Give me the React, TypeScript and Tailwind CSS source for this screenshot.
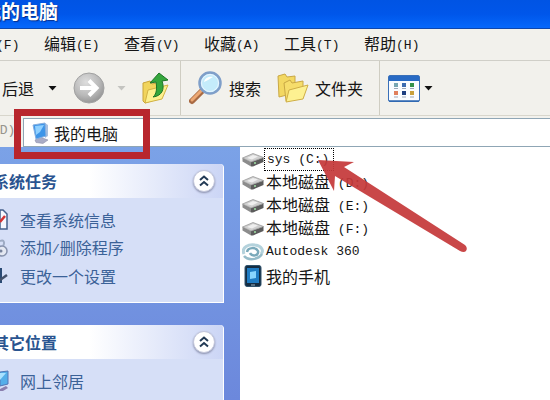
import React from 'react';

const Latin = ({ children }: { children: React.ReactNode }) => (
  <span className="align-[1px] font-['Liberation_Mono','Noto_Sans_CJK_SC',monospace] text-[13px]">{children}</span>
);

const menus: [string, string][] = [
  ['文件', 'F'],
  ['编辑', 'E'],
  ['查看', 'V'],
  ['收藏', 'A'],
  ['工具', 'T'],
  ['帮助', 'H'],
];

const Caret = ({ color = '#111' }: { color?: string }) => (
  <svg width="9" height="5" viewBox="0 0 9 5" className="shrink-0">
    <path d="M0.5 0H8.500L4.500 4.500Z" fill={color} />
  </svg>
);

const Divider = () => <div className="h-[54px] w-px shrink-0 bg-[#cfcdc2]" />;

const ForwardIcon = () => (
  <svg width="32" height="32" viewBox="0 0 32 32" className="shrink-0">
    <defs>
      <radialGradient id="fwd" cx="0.4" cy="0.3" r="0.75">
        <stop offset="0" stopColor="#dedede" />
        <stop offset="0.6" stopColor="#b9b9b9" />
        <stop offset="1" stopColor="#909090" />
      </radialGradient>
    </defs>
    <circle cx="16" cy="16" r="15" fill="url(#fwd)" stroke="#a2a2a2" />
    <path d="M7 16H23M16 8.500L23.500 16L16 23.500" fill="none" stroke="#fff" strokeWidth="4" />
  </svg>
);

const UpFolderIcon = () => (
  <svg width="28" height="32" viewBox="0 0 28 32" className="shrink-0">
    <path d="M1 11L8 9L10 12L19 10V26L3 31L1 29Z" fill="#f1d45c" stroke="#c9a43a" />
    <path d="M6 18L26 13L20 27L3 31Z" fill="#fdf08e" stroke="#d2b244" />
    <path d="M11 25C15 22 15 15 14 10L8 11L17 1L26 8L20 9C23 17 20 24 11 25Z" fill="#35a63c" stroke="#1c7526" />
  </svg>
);

const SearchIcon = () => (
  <svg width="34" height="34" viewBox="0 0 34 34" className="shrink-0">
    <path d="M3 30L13 20" stroke="#a86a43" strokeWidth="6" strokeLinecap="round" />
    <path d="M3 29L12 20" stroke="#eda873" strokeWidth="3" strokeLinecap="round" />
    <circle cx="21" cy="12" r="10.500" fill="#c4ecfb" stroke="#7f9fc9" strokeWidth="2.500" />
    <circle cx="21" cy="12" r="8.500" fill="none" stroke="#ebf6ff" strokeWidth="1" />
    <path d="M15 11C16 6 21 5 24 6C20 8 18 10 15 11Z" fill="#fff" />
  </svg>
);

const FoldersIcon = () => (
  <svg width="32" height="30" viewBox="0 0 32 30" className="shrink-0">
    <path d="M1 3L8 1L10 4L18 3V20L2 24Z" fill="#f3d862" stroke="#c9a845" />
    <path d="M7 10L13 7L15 10L26 8V24L9 28Z" fill="#f6dd6b" stroke="#c9a845" />
    <path d="M12 17L31 12L26 26L9 29Z" fill="#fdf191" stroke="#cfae45" />
  </svg>
);

const ViewsIcon = () => (
  <svg width="32" height="27" viewBox="0 0 32 27" className="shrink-0">
    <rect x="0.500" y="0.500" width="31" height="26" rx="1.500" fill="#fafcff" stroke="#3a70b8" />
    <path d="M1 1H31V6H1Z" fill="#286ac4" />
    <path d="M1 26H31" stroke="#2e67b1" strokeWidth="1.500" />
    <path d="M6 8h4v4H6Z" fill="#78a6b2" />
    <path d="M14 8h4v4h-4Z" fill="#3b6bb0" />
    <path d="M22 8h4v4h-4Z" fill="#359249" />
    <path d="M6 16h4v4H6Z" fill="#e07f5d" />
    <path d="M14 16h4v4h-4Z" fill="#1d3e80" />
    <path d="M22 16h4v4h-4Z" fill="#c8a03c" />
    <path d="M6 13.500h4M14 13.500h4M22 13.500h4M6 22h4M14 22h4M22 22h4" stroke="#9ca7b7" />
  </svg>
);

const ComputerIcon = () => (
  <svg width="18" height="22" viewBox="0 0 18 22" className="shrink-0">
    <path d="M3 18L8 15L16 18L11 21.500L4 20.500Z" fill="#a9acc6" stroke="#8487a5" strokeWidth="0.500" />
    <path d="M13 1L16 3V14L13 16Z" fill="#a8bfdf" />
    <path d="M1 3L13 1L14 14L4 17Z" fill="#3e95e8" stroke="#87aede" />
    <path d="M3 4L12 3L8 10L4 13Z" fill="#91d1ff" />
  </svg>
);

const DriveIcon = () => (
  <svg width="22" height="14" viewBox="0 0 22 14" className="shrink-0">
    <path d="M0.500 5L9 9V13.500L0.500 8.500Z" fill="#8c8c8c" />
    <path d="M9 9L21.500 4.500V9L11 13.500H9Z" fill="#5c5c5c" />
    <path d="M0.500 5L11 0.500L21.500 4.500L9 9Z" fill="#cfcfcf" stroke="#8e8e8e" strokeWidth="0.700" />
    <path d="M5 5L11 2L16 3.500L10 6.500Z" fill="#efefef" />
    <circle cx="13" cy="10" r="1" fill="#9fe0a4" />
  </svg>
);

const AutodeskIcon = () => (
  <svg width="22" height="18" viewBox="0 0 22 18" className="shrink-0">
    <path d="M2 11C-1 4 7 1 13 2C20 3 22 8 19 11" fill="none" stroke="#b4d2dc" strokeWidth="3" />
    <path d="M5 9C6 4 14 4 16 8C17 13 10 14 8 10" fill="none" stroke="#7aa9ba" strokeWidth="2.500" />
    <path d="M2 13C6 18 16 17 20 11" fill="none" stroke="#96bcc9" strokeWidth="2.500" />
  </svg>
);

const PhoneIcon = () => (
  <svg width="22" height="22" viewBox="0 0 22 22" className="shrink-0">
    <rect x="3" y="0.500" width="16" height="21" rx="2" fill="#142d43" stroke="#30536d" />
    <rect x="5" y="3" width="12" height="15" fill="#1f7cc4" />
    <path d="M8 7L14 6V13L8 14Z" fill="#88d5ff" />
    <path d="M9 20H13" stroke="#9cb5c5" />
  </svg>
);

const InfoIcon = () => (
  <svg width="8" height="22" viewBox="0 0 8 22" className="shrink-0">
    <path d="M0 1H3L7 5V20H0Z" fill="#f6f8ff" stroke="#47628d" strokeWidth="1.500" />
    <path d="M0 13L5 7" stroke="#d43434" strokeWidth="2.500" />
  </svg>
);

const ProgramsIcon = () => (
  <svg width="8" height="22" viewBox="0 0 8 22" className="shrink-0">
    <path d="M0 4C4 2 5 6 3 9" fill="none" stroke="#9eabc4" strokeWidth="2" />
    <circle cx="2" cy="14" r="5" fill="#e4e8f2" stroke="#8792ad" strokeWidth="1.500" />
    <circle cx="1" cy="14" r="1.500" fill="#75819c" />
  </svg>
);

const SettingsIcon = () => (
  <svg width="8" height="22" viewBox="0 0 8 22" className="shrink-0">
    <path d="M0 3H2V18H0Z" fill="#2a4a74" />
    <path d="M0 15L7 10" stroke="#43516b" strokeWidth="2.500" />
  </svg>
);

const NetworkIcon = () => (
  <svg width="9" height="22" viewBox="0 0 9 22" className="shrink-0">
    <path d="M0 2L8 1V14L0 16Z" fill="#54aee9" stroke="#5275b5" />
    <path d="M0 3L6 3L0 10Z" fill="#a9e1ff" />
    <path d="M0 19L6 16L8 18L3 21H0Z" fill="#8a7fae" />
  </svg>
);

type Task = { id: string; label: React.ReactNode; icon: React.ReactNode };

const TaskPanel = ({ title, tasks }: { title: string; tasks: Task[] }) => (
  <section className="mr-4 rounded-tr border-r border-b border-white bg-[#d6dff7] pb-3">
    <header className="flex h-[34px] items-center justify-between rounded-tr bg-linear-to-r from-white from-40% to-[#cbd5f5] pr-2">
      <h2 className="-ml-[7px] text-[16px] leading-6 font-bold whitespace-nowrap text-[#2a5490]">{title}</h2>
      <button
        aria-label={title}
        className="flex size-[22px] items-center justify-center rounded-full border border-[#c3c7dc] bg-white shadow-[0_1px_2px_#8b91ad]"
      >
        <svg width="10" height="12" viewBox="0 0 10 12">
          <path d="M1 5L5 1.500L9 5M1 10.500L5 7L9 10.500" fill="none" stroke="#223a55" strokeWidth="2" />
        </svg>
      </button>
    </header>
    <ul className="pt-2">
      {tasks.map((t) => (
        <li key={t.id} className="flex h-7 items-center">
          <span className="w-5 shrink-0">{t.icon}</span>
          <a href="#" className="text-[16px] leading-6 whitespace-nowrap text-[#3b6298]">
            {t.label}
          </a>
        </li>
      ))}
    </ul>
  </section>
);

const drives = ['D', 'E', 'F'];

export default function App() {
  return (
    <div className="relative flex h-screen flex-col overflow-hidden bg-[#f2f1ec] font-['Noto_Sans_CJK_SC',sans-serif] text-[16px] leading-6 text-[#161616]">
      <div className="flex h-[29px] shrink-0 items-start border-b border-[#0d47ae] bg-linear-to-b from-[#0054e4] via-[#0056ea] to-[#0668fc]">
        <h1 className="-ml-[18px] text-[19px] leading-[22px] font-bold whitespace-nowrap text-white [text-shadow:1px_1px_1px_#08308c]">
          我的电脑
        </h1>
      </div>

      <nav className="-ml-9 flex h-8 shrink-0 items-center gap-6 border-b border-[#d0cfc8]">
        {menus.map(([name, key]) => (
          <button key={key} className="w-14 text-left whitespace-nowrap">
            {name}
            <Latin>({key})</Latin>
          </button>
        ))}
      </nav>

      <div className="flex h-[54px] shrink-0 items-center whitespace-nowrap">
        <button className="ml-0.5 flex items-center gap-3.5">
          后退
          <Caret />
        </button>
        <button aria-label="前进" className="ml-4 flex items-center gap-3">
          <ForwardIcon />
          <Caret color="#c4c4c0" />
        </button>
        <button aria-label="向上" className="mr-2.5 ml-4">
          <UpFolderIcon />
        </button>
        <Divider />
        <button className="ml-2 flex items-center gap-1.5">
          <SearchIcon />
          搜索
        </button>
        <button className="mr-4 ml-4 flex items-center gap-1.5">
          <FoldersIcon />
          文件夹
        </button>
        <Divider />
        <button aria-label="查看方式" className="ml-2 flex items-center gap-1">
          <ViewsIcon />
          <Caret />
        </button>
      </div>

      <div className="flex h-8 shrink-0 items-end border-t border-[#d8d6cc]">
        <label htmlFor="address" className="-ml-2 w-[31px] shrink-0 pb-1 text-[#96948c]">
          <Latin>(D)</Latin>
        </label>
        <div className="flex h-[29px] flex-1 items-center gap-1 border border-r-0 border-[#8fa6b5] bg-white pl-2">
          <ComputerIcon />
          <input id="address" defaultValue="我的电脑" className="h-6 min-w-0 flex-1 bg-transparent outline-none" />
        </div>
      </div>

      <main className="flex min-h-0 flex-1">
        <aside className="flex w-60 shrink-0 flex-col gap-[22px] overflow-hidden bg-linear-to-b from-[#7ba2e7] to-[#6c88dc] pt-[17px]">
          <TaskPanel
            title="系统任务"
            tasks={[
              { id: 'info', label: '查看系统信息', icon: <InfoIcon /> },
              {
                id: 'programs',
                label: (
                  <>
                    添加<Latin>/</Latin>删除程序
                  </>
                ),
                icon: <ProgramsIcon />,
              },
              { id: 'settings', label: '更改一个设置', icon: <SettingsIcon /> },
            ]}
          />
          <TaskPanel title="其它位置" tasks={[{ id: 'network', label: '网上邻居', icon: <NetworkIcon /> }]} />
        </aside>
        <ul className="min-w-0 flex-1 bg-white pt-px pl-0.5 whitespace-nowrap">
          <li className="flex h-[23px] items-center">
            <DriveIcon />
            <span className="flex h-[23px] w-[70px] items-center border border-dotted border-black pl-0.5">
              <Latin>sys (C:)</Latin>
            </span>
          </li>
          {drives.map((d) => (
            <li key={d} className="flex h-[23px] items-center gap-0.5">
              <DriveIcon />
              <span>
                本地磁盘<Latin> ({d}:)</Latin>
              </span>
            </li>
          ))}
          <li className="flex h-6 items-center gap-0.5">
            <AutodeskIcon />
            <Latin>Autodesk 360</Latin>
          </li>
          <li className="flex h-[23px] items-center gap-0.5">
            <PhoneIcon />
            我的手机
          </li>
        </ul>
      </main>

      <div className="pointer-events-none absolute top-[109px] left-3.5 h-[50px] w-[136px] border-[7px] border-[#b8262d]" />
      <svg
        width="150"
        height="95"
        viewBox="0 0 150 95"
        className="pointer-events-none absolute top-[158px] left-[318px]"
      >
        <path
          d="M0 2L36 4L26 9L147 87Q150 90 148 93Q146 95 142 93L17 18L16 33Z"
          fill="#c5393a"
          fillOpacity="0.930"
        />
      </svg>
    </div>
  );
}
